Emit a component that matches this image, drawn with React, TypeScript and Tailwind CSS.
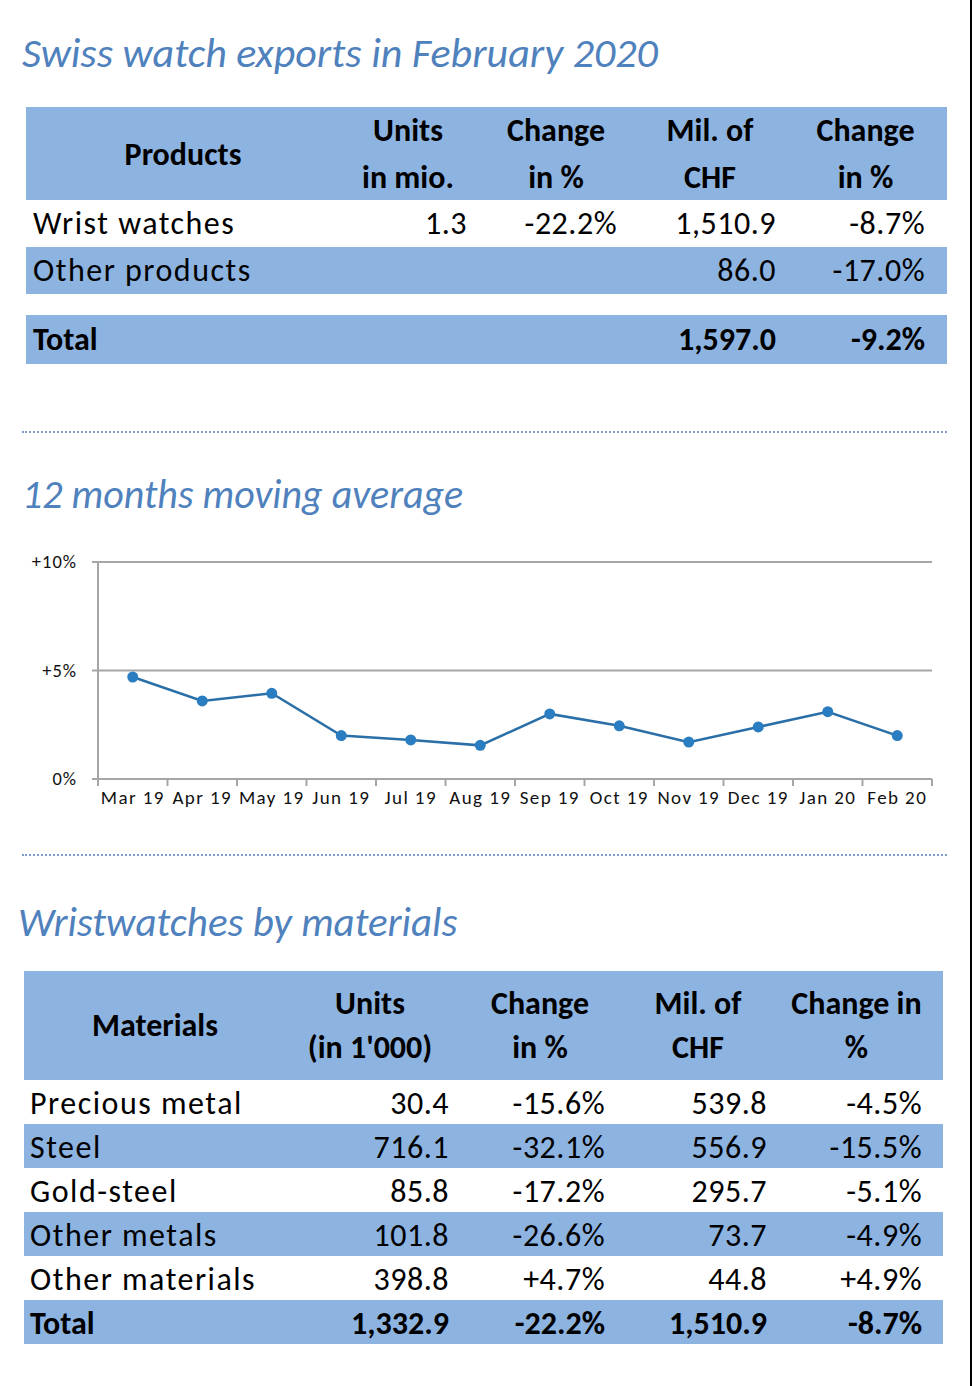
import React from 'react';

const font = { fontFamily: 'Carlito, Lato, "Noto Sans", sans-serif' };

const months = ['Mar 19', 'Apr 19', 'May 19', 'Jun 19', 'Jul 19', 'Aug 19', 'Sep 19', 'Oct 19', 'Nov 19', 'Dec 19', 'Jan 20', 'Feb 20'];
const values = [4.7, 3.6, 3.95, 2.0, 1.8, 1.55, 3.0, 2.45, 1.7, 2.4, 3.1, 2.0];

const products = [
  { name: 'Wrist watches', units: '1.3', ch1: '-22.2%', chf: '1,510.9', ch2: '-8.7%', blue: false },
  { name: 'Other products', units: '', ch1: '', chf: '86.0', ch2: '-17.0%', blue: true },
];

const materials = [
  { name: 'Precious metal', units: '30.4', ch1: '-15.6%', chf: '539.8', ch2: '-4.5%' },
  { name: 'Steel', units: '716.1', ch1: '-32.1%', chf: '556.9', ch2: '-15.5%' },
  { name: 'Gold-steel', units: '85.8', ch1: '-17.2%', chf: '295.7', ch2: '-5.1%' },
  { name: 'Other metals', units: '101.8', ch1: '-26.6%', chf: '73.7', ch2: '-4.9%' },
  { name: 'Other materials', units: '398.8', ch1: '+4.7%', chf: '44.8', ch2: '+4.9%' },
];

const Title = ({ children, className }: { children: React.ReactNode; className?: string }) => (
  <h2 className={'italic text-[#4f81bd] leading-none ' + (className || '')}>{children}</h2>
);

const Dotted = ({ className }: { className?: string }) => (
  <div className={'h-0 border-t-2 border-dotted border-[#7f9cc4] ' + (className || '')} />
);

const MovingAverageChart = () => {
  const x0 = 98;
  const x1 = 932;
  const step = (x1 - x0) / 12;
  const yZero = 234;
  const perPct = 21.7;
  const pts = values.map((v, i) => [x0 + step * (i + 0.5), yZero - v * perPct]);
  return (
    <svg width="972" height="270" className="block" style={font}>
      {[17, 125.5, 234].map(y => (
        <line key={y} x1={x0 - 6} x2={x1} y1={y} y2={y} stroke="#a6a6a6" strokeWidth="2" />
      ))}
      <line x1={x0} x2={x0} y1={17} y2={234} stroke="#a6a6a6" strokeWidth="2" />
      {Array.from({ length: 13 }).map((_, i) => (
        <line key={i} x1={x0 + step * i} x2={x0 + step * i} y1={234} y2={241} stroke="#a6a6a6" strokeWidth="2" />
      ))}
      <g fontSize="18.5" fill="#111" letterSpacing="1" textAnchor="end">
        <text x="77" y="23">+10%</text>
        <text x="77" y="132">+5%</text>
        <text x="77" y="240">0%</text>
      </g>
      <polyline points={pts.map(p => p.join(',')).join(' ')} fill="none" stroke="#2a6fa8" strokeWidth="2.5" />
      {pts.map((p, i) => (
        <circle key={i} cx={p[0]} cy={p[1]} r="5.5" fill="#2a7dc0" />
      ))}
      <g fontSize="19" fill="#111" letterSpacing="1.4" textAnchor="middle">
        {months.map((m, i) => (
          <text key={m} x={x0 + step * (i + 0.5)} y="259">{m}</text>
        ))}
      </g>
    </svg>
  );
};

const cols1 = 'grid grid-cols-[314px_136px_160px_148px_163px]';
const cols2 = 'grid grid-cols-[262px_168px_172px_144px_173px]';

export default function App() {
  return (
    <div className="w-[972px] h-[1386px] bg-white border-r-2 border-black overflow-hidden text-black" style={font}>
      <div className="pt-[32px] pl-[22px]">
        <Title className="text-[42px]">Swiss watch exports in February 2020</Title>
      </div>

      {/* products table */}
      <div className="mt-[33px] ml-[26px] w-[921px]">
        <div className={cols1 + ' bg-[#8db3e0] h-[93px] font-bold text-[32px] leading-[47px] items-center'}>
          <div className="text-center">Products</div>
          <div className="text-center">Units<br />in mio.</div>
          <div className="text-center">Change<br />in %</div>
          <div className="text-center">Mil. of<br />CHF</div>
          <div className="text-center">Change<br />in %</div>
        </div>
        {products.map(r => (
          <div key={r.name} className={cols1 + ' h-[47px] items-center text-[32px] ' + (r.blue ? 'bg-[#8db3e0]' : '')}>
            <div className="pl-[7px] tracking-[1.5px]">{r.name}</div>
            <div className="text-right pr-[9px] tracking-[0.5px]">{r.units}</div>
            <div className="text-right pr-[19px] tracking-[0.5px]">{r.ch1}</div>
            <div className="text-right pr-[8px] tracking-[0.5px]">{r.chf}</div>
            <div className="text-right pr-[22px] tracking-[0.5px]">{r.ch2}</div>
          </div>
        ))}
        <div className={cols1 + ' h-[49px] items-center text-[32px] font-bold bg-[#8db3e0] mt-[21px]'}>
          <div className="pl-[7px]">Total</div>
          <div />
          <div />
          <div className="text-right pr-[8px]">1,597.0</div>
          <div className="text-right pr-[22px]">-9.2%</div>
        </div>
      </div>

      <Dotted className="mt-[67px] ml-[22px] w-[925px]" />

      <div className="mt-[42px] pl-[22px]">
        <Title className="text-[40px]">12 months moving average</Title>
      </div>

      <div className="mt-[30px]">
        <MovingAverageChart />
      </div>

      <Dotted className="mt-[39px] ml-[22px] w-[925px]" />

      <div className="mt-[46px] pl-[18px]">
        <Title className="text-[41px]">Wristwatches by materials</Title>
      </div>

      {/* materials table */}
      <div className="mt-[28px] ml-[24px] w-[919px]">
        <div className={cols2 + ' bg-[#8db3e0] h-[109px] font-bold text-[32px] leading-[44px] items-center'}>
          <div className="text-center">Materials</div>
          <div className="text-center">Units<br />(in 1'000)</div>
          <div className="text-center">Change<br />in %</div>
          <div className="text-center">Mil. of<br />CHF</div>
          <div className="text-center">Change in<br />%</div>
        </div>
        {materials.map((r, i) => (
          <div key={r.name} className={cols2 + ' h-[44px] items-center text-[32px] ' + (i % 2 === 1 ? 'bg-[#8db3e0]' : '')}>
            <div className="pl-[6px] tracking-[1.5px]">{r.name}</div>
            <div className="text-right pr-[5px] tracking-[0.5px]">{r.units}</div>
            <div className="text-right pr-[21px] tracking-[0.5px]">{r.ch1}</div>
            <div className="text-right pr-[3px] tracking-[0.5px]">{r.chf}</div>
            <div className="text-right pr-[21px] tracking-[0.5px]">{r.ch2}</div>
          </div>
        ))}
        <div className={cols2 + ' h-[44px] items-center text-[32px] font-bold bg-[#8db3e0]'}>
          <div className="pl-[6px]">Total</div>
          <div className="text-right pr-[5px]">1,332.9</div>
          <div className="text-right pr-[21px]">-22.2%</div>
          <div className="text-right pr-[3px]">1,510.9</div>
          <div className="text-right pr-[21px]">-8.7%</div>
        </div>
      </div>
    </div>
  );
}
